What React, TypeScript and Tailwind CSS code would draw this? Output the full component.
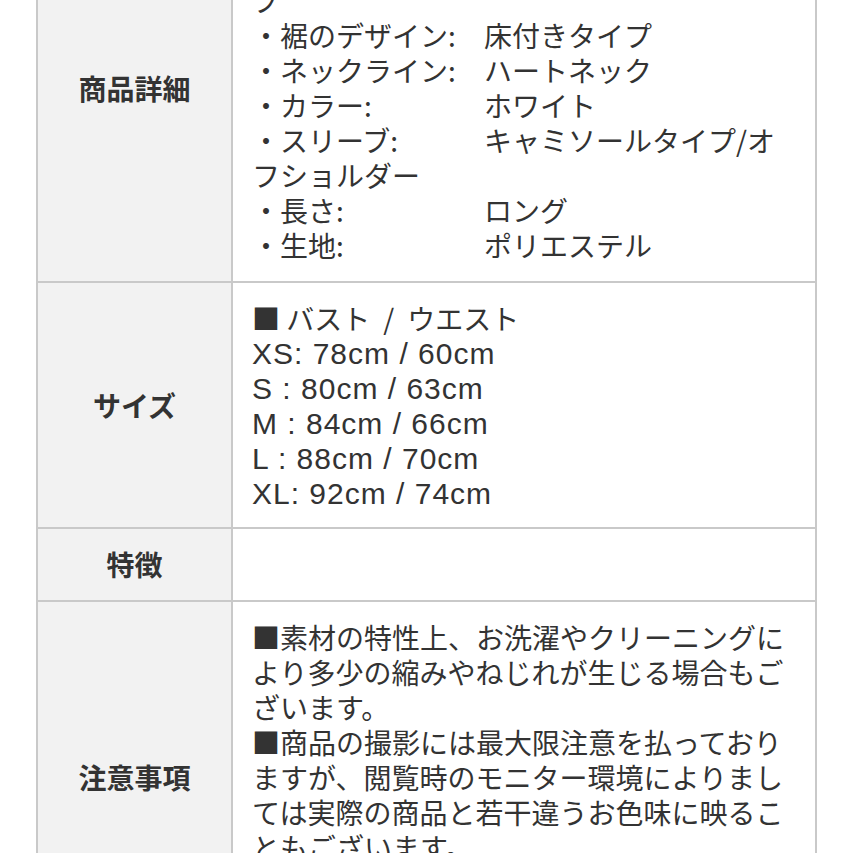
const jp = "font-['Noto_Sans_CJK_JP',sans-serif]";
const latin = "font-['Liberation_Sans','Noto_Sans_CJK_JP',sans-serif] text-[30px] leading-[35px] tracking-[1px]";

const Label = ({ children }: { children: React.ReactNode }) => (
  <div className="flex items-center justify-center bg-[#f2f2f2] border-r-2 border-[#c9c9c9] font-bold text-[#333]">
    {children}
  </div>
);

const Spec = ({ name, value }: { name: string; value: string }) => (
  <div>
    <span className="inline-block w-[232px]">{name}</span>
    {value}
  </div>
);

const App = () => {
  return (
    <div className={`min-h-[853px] h-[853px] overflow-hidden bg-white ${jp} text-[28px] leading-[35px] text-[#333]`}>
      <div className="-mt-[107px] ml-[36px] w-[781px] border-x-2 border-[#c9c9c9]">
        {/* 商品詳細 */}
        <div className="grid grid-cols-[195px_1fr] border-t-2 border-[#c9c9c9]">
          <Label>商品詳細</Label>
          <div className="px-[19px] py-[18px]">
            <Spec name="・シルエット:" value="マーメイド" />
            <Spec name="・スカート:" value="ビスチェマーメイドタイプ" />
            <Spec name="・裾のデザイン:" value="床付きタイプ" />
            <Spec name="・ネックライン:" value="ハートネック" />
            <Spec name="・カラー:" value="ホワイト" />
            <Spec name="・スリーブ:" value="キャミソールタイプ/オフショルダー" />
            <Spec name="・長さ:" value="ロング" />
            <Spec name="・生地:" value="ポリエステル" />
          </div>
        </div>

        {/* サイズ */}
        <div className="grid grid-cols-[195px_1fr] border-t-2 border-[#c9c9c9]">
          <Label>サイズ</Label>
          <div className="px-[19px] pt-[18px] pb-[16px]">
            <div>
              ■ バスト<span className="px-[13px]">/</span>ウエスト
            </div>
            <div className={latin}>XS: 78cm / 60cm</div>
            <div className={latin}>S : 80cm / 63cm</div>
            <div className={latin}>M : 84cm / 66cm</div>
            <div className={latin}>L : 88cm / 70cm</div>
            <div className={latin}>XL: 92cm / 74cm</div>
          </div>
        </div>

        {/* 特徴 */}
        <div className="grid grid-cols-[195px_1fr] border-t-2 border-[#c9c9c9]">
          <Label>特徴</Label>
          <div className="px-[19px] py-[18px] h-[71px]"></div>
        </div>

        {/* 注意事項 */}
        <div className="grid grid-cols-[195px_1fr] border-t-2 border-[#c9c9c9]">
          <Label>注意事項</Label>
          <div className="px-[19px] py-[18px]">
            <p>■素材の特性上、お洗濯やクリーニングにより多少の縮みやねじれが生じる場合もございます。</p>
            <p>■商品の撮影には最大限注意を払っておりますが、閲覧時のモニター環境によりましては実際の商品と若干違うお色味に映ることもございます。</p>
            <p>■サイズは平置きにて採寸しております。多少の誤差はご了承ください。</p>
          </div>
        </div>
      </div>
    </div>
  );
};

export default App;
